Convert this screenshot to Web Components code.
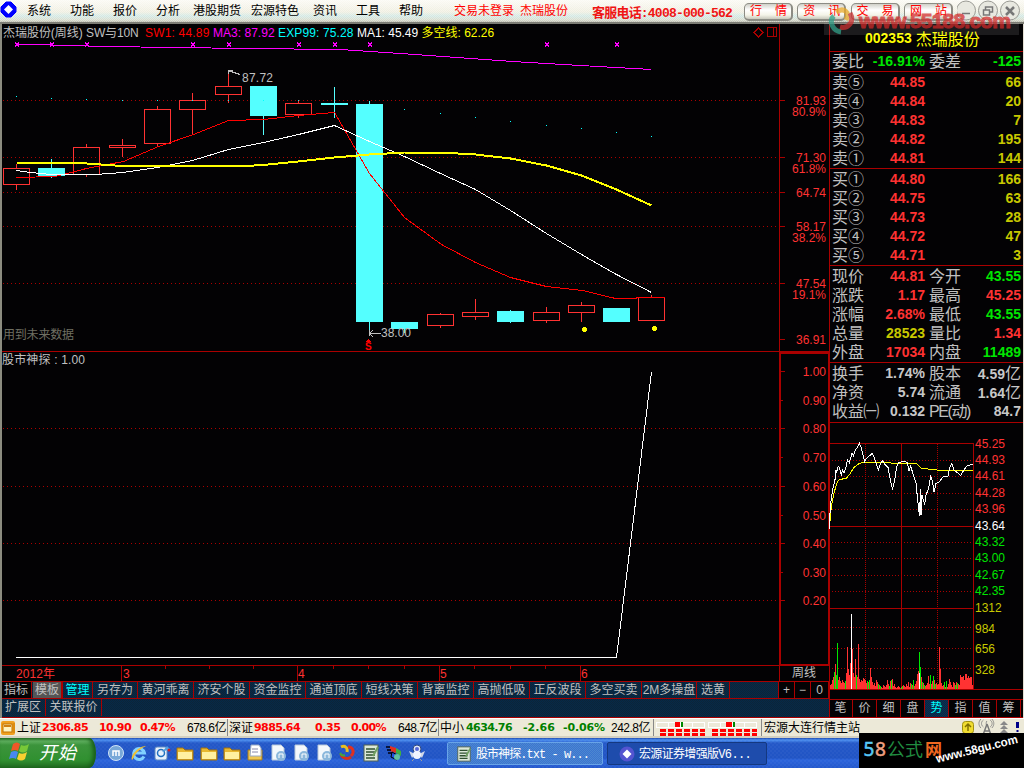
<!DOCTYPE html>
<html lang="zh-CN">
<head>
<meta charset="utf-8">
<title>杰瑞股份</title>
<style>
  html, body { margin: 0; padding: 0; }
  body {
    width: 1024px;
    height: 768px;
    overflow: hidden;
    background: #030204;
    font: 12px/16px "Liberation Sans", "Noto Sans CJK SC", sans-serif;
    color: #c0c0c0;
  }
</style>
</head>
<body>
<stock-terminal></stock-terminal>

<script>
// Text with a fixed width: the letter spacing is adjusted so that it fits
class FitText extends HTMLElement {
  constructor() {
    super();
    this.attachShadow({ mode: 'open' });
    this.shadowRoot.innerHTML = `
      <style>
        :host { display: inline-block; white-space: nowrap; flex: none; }
        span { display: inline-block; white-space: pre; }
      </style>
      <span><slot></slot></span>
    `;
  }

  connectedCallback() {
    const width = Number(this.getAttribute('w'));
    const span = this.shadowRoot.querySelector('span');
    const count = this.textContent.length;
    const natural = span.getBoundingClientRect().width;
    if (!width || !natural) return;
    span.style.letterSpacing = (width - natural) / count + 'px';
    this.style.width = width + 'px';
  }
}
customElements.define('fit-text', FitText);

class MenuBar extends HTMLElement {
  constructor() {
    super();
    this.attachShadow({ mode: 'open' });
    const items = [['系统', 43], ['功能', 43], ['报价', 43], ['分析', 37], ['港股期货', 58], ['宏源特色', 62], ['资讯', 43], ['工具', 43], ['帮助', 55]];
    this.shadowRoot.innerHTML = `
      <style>
        :host {
          display: flex;
          align-items: center;
          height: 22px;
          color: #000;
          border-bottom: 2px solid #7c7c74;
          background:
            repeating-conic-gradient(#fff5 0 25%, transparent 0 50%) 0 0 / 2px 2px,
            linear-gradient(#fbfaf4, #efeee0 12px, #d2e8e4 16px, #d8dccc 20px, #b8b8ac);
        }
        .logo { width: 17px; height: 17px; margin: -3px 10px 0 0; flex: none; }
        .item, .login, .name { flex: none; }
        .login { color: #f00; width: 66px; }
        .name { color: #f00; width: 72px; }
        .phone { font: bold 13px "Liberation Mono", "Noto Sans CJK SC", monospace; color: #f01414; width: 152px; flex: none; }
        .btn {
          box-sizing: border-box;
          width: 49px;
          height: 18px;
          margin: 1px 4.3px 0 0;
          padding: 0 4px 0 5px;
          display: flex;
          justify-content: space-between;
          align-items: center;
          border: 1px solid #8c8c84;
          border-right-width: 2px;
          border-bottom-width: 2px;
          border-radius: 5px;
          background: linear-gradient(#d0d0c8, #fff 6px, #f4f4e8 11px, #c8c8bc);
          color: #f00;
          flex: none;
        }
        .btn i { font-style: normal; }
        .win { width: 66px; height: 22px; flex: none; }
      </style>
      <svg class="logo" viewBox="0 0 17 17">
        <path d="M6 1h5l5 5v5l-5 5H6l-5-5V6z" fill="#00f" stroke="#00f" stroke-linejoin="round"/>
        <path d="M8.500 4 13 8.500 8.500 13 4 8.500z" fill="#fff"/>
      </svg>
      ${items.map(([t, w]) => `<span class="item" style="width:${w}px">${t}</span>`).join('')}
      <span class="login">交易未登录</span>
      <span class="name">杰瑞股份</span>
      <span class="phone"><fit-text w="140">客服电话:4008-000-562</fit-text></span>
      ${['行情', '资讯', '交易', '网站'].map(t => `<span class="btn"><i>${t[0]}</i><i>${t[1]}</i></span>`).join('')}
      <svg class="win" viewBox="0 0 66 22" fill="#e8e8e0" stroke="#9a9a94">
        <circle cx="9" cy="10.500" r="9.500"/><circle cx="31" cy="10.500" r="9.500"/><circle cx="53" cy="10.500" r="9.500"/>
        <path d="M5 13.500h8M28.500 10V7h7v5h-3M26.500 10h6v5h-6z" stroke="#777" fill="none" stroke-width="1.500"/>
        <path d="M49 7l8 8M57 7l-8 8" stroke="#777" stroke-width="2.500"/>
      </svg>
    `;
  }
}
customElements.define('menu-bar', MenuBar);

// Weekly candles with the averages on top of them
class KlineChart extends HTMLElement {
  constructor() {
    super();
    this.attachShadow({ mode: 'open' });
    // x centre, box top, box bottom, wick top, wick bottom, rising
    const candles = [
      [16, 168, 184, 164, 190, 1], [51, 168, 176, 159, 178, 0], [86, 147, 174, 144, 177, 1],
      [122, 145, 147, 139, 157, 1], [157, 109, 143, 106, 147, 1], [192, 100, 109, 93, 134, 1],
      [228, 86, 94, 73, 103, 1], [263, 86, 116, 86, 135, 0], [298, 103, 114, 101, 118, 1],
      [334, 103, 105, 87, 118, 0], [369, 104, 322, 101, 333, 0], [404, 322, 329, 322, 333, 0],
      [440, 314, 325, 313, 328, 1], [475, 312, 316, 299, 320, 1], [510, 311, 322, 310, 323, 0],
      [546, 312, 320, 307, 323, 1], [581, 305, 312, 302, 322, 1], [616, 308, 322, 308, 322, 0],
      [651, 297, 320, 295, 320, 1]
    ];
    const body = candles.map(([x, t, b, h, l, up]) => up
      ? `<path d="M${x + .5} ${h}V${t}M${x + .5} ${b}V${l}M${x - 12.5} ${t + .5}h26V${b + .5}h-26z" fill="none" stroke="#ff3232"/>`
      : `<path d="M${x - 13} ${t}h27V${b}h-27zM${x} ${h}h1V${l}h-1z" fill="#54ffff"/>`).join('');
    const grid = [100, 157, 192, 226, 283].map(y => `<path d="M3 ${y + .5}H779" stroke-dasharray="1 3"/>`).join('');
    const ticks = [100, 157, 192, 226, 283, 339].map(y => `<path d="M779 ${y + .5}h6"/>`).join('');
    const labels = [[105, '81.93'], [116, '80.9%'], [162, '71.30'], [173, '61.8%'], [197, '64.74'], [231, '58.17'], [242, '38.2%'], [288, '47.54'], [299, '19.1%'], [344, '36.91']]
      .map(([y, t]) => `<text x="826" y="${y}" text-anchor="end" textLength="${t.includes('%') ? 34 : 30}">${t}</text>`).join('');
    const dots = [[16, 96], [51, 98], [86, 99], [122, 100], [157, 100], [192, 100], [228, 100], [263, 100], [298, 100], [404, 109], [440, 113], [475, 117], [510, 121], [546, 125], [581, 128], [616, 132], [651, 136]]
      .map(([x, y]) => `<rect x="${x}" y="${y}" width="1" height="1"/>`).join('');
    const marks = [17, 52, 87, 193, 229, 299, 335, 370, 547, 617]
      .map(x => `<path d="M${x - 2} 42l4 4M${x + 2} 42l-4 4"/>`).join('');

    this.shadowRoot.innerHTML = `
      <style>
        :host { display: grid; height: 328px; background: #030204; }
        .head, svg { grid-area: 1 / 1; }
        svg { display: block; shape-rendering: crispEdges; }
        text { font-size: 12px; fill: #ff3232; }
        .head { display: flex; height: 17px; padding-left: 3px; align-items: center; z-index: 1; }
      </style>
      <div class="head">
        <fit-text w="83">杰瑞股份(周线) </fit-text>
        <fit-text w="59">SW与10N  </fit-text>
        <fit-text w="68" style="color:#f00">SW1: 44.89 </fit-text>
        <fit-text w="65" style="color:#f0f">MA3: 87.92 </fit-text>
        <fit-text w="79" style="color:#0ff">EXP99: 75.28 </fit-text>
        <fit-text w="64.500" style="color:#fff">MA1: 45.49 </fit-text>
        <fit-text w="76" style="color:#ff0">多空线: 62.26 </fit-text>
      </div>
      <svg width="829" height="328" viewBox="0 24 829 328">
        <g stroke="#aa0000" fill="none">
          ${grid}${ticks}
          <path d="M779.5 24V352M0 351.5H829"/>
          <path d="M767.5 27.500h9v9h-9zM773.5 27V37M758.5 28l4.500 4.500-4.500 4.500-4.500-4.500z"/>
        </g>
        ${body}
        <g fill="none" transform="translate(.5 .5)">
          <polyline points="16,44 34,44 104,46 175,47 246,48 340,49 400,53 512,61 580,65 651,69" stroke="#f0f"/>
          <polyline points="16,177 55,176 86,168 123,161 158,146 193,134 228,120 263,119 298,115 334,112 369,173 404,217 441,244 475,262 510,277 546,286 582,290 615,298 634,298 638,297 664,297" stroke="#f00"/>
          <polyline points="16,170 30,172 51,174 95,174 122,172 157,167 192,160 228,149 263,142 298,134 334,125 369,141 404,156 440,173 475,189 510,210 546,233 581,254 616,274 651,292" stroke="#fff"/>
          <polyline points="16,162 51,162 86,163 122,165.500 245,165.500 263,164.500 298,161 334,157 369,154 404,152 440,152 475,154 510,158 546,165 581,175 616,189 651,205" stroke="#ff0" stroke-width="2"/>
        </g>
        <g fill="#0ff">${dots}</g>
        <g stroke="#f0f" transform="translate(0 .5)">${marks}</g>
        <circle cx="584.5" cy="329.5" r="2.5" fill="#ff0"/>
        <circle cx="654.5" cy="328.5" r="2.5" fill="#ff0"/>
        <path d="M228.500 74v-4h4M228 70.500l12 4M369.500 336v-6M370 333.500h11M370 333l3-3M370 334l3 3" stroke="#c0c0c0" fill="none"/>
        <text x="242" y="82" style="fill:#c0c0c0" textLength="31">87.72</text>
        <text x="381" y="337" style="fill:#c0c0c0" textLength="30">38.00</text>
        <text x="365" y="350" style="fill:#f00;font-weight:bold;font-size:10px">S</text>
        <path d="M366 341.500l2.500-2.500 2.500 2.500z" fill="#f00"/>
        <text x="3" y="338.5" style="fill:#6f6f62" textLength="71">用到未来数据</text>
        ${labels}
      </svg>
    `;
  }
}
customElements.define('kline-chart', KlineChart);

class IndicatorChart extends HTMLElement {
  constructor() {
    super();
    this.attachShadow({ mode: 'open' });
    const levels = [371, 400, 428, 457, 486, 515, 543, 572, 600];
    const scale = levels.map((y, i) => `
      <path d="M779 ${y + .5}h${i % 2 ? 4 : 6}"/>
      ${i && i % 2 === 0 ? `<path d="M3 ${y + .5}H779" stroke-dasharray="1 3"/>` : ''}`).join('');
    const labels = levels.map((y, i) => `<text x="826" y="${y + 5}" text-anchor="end">${(1 - i / 10).toFixed(2)}</text>`).join('');
    const minor = [165, 209, 253, 333, 368, 404, 474, 510, 545].map(x => `<path d="M${x + .5} 666v3"/>`).join('');
    const major = [121, 297, 439, 580].map(x => `<path d="M${x + .5} 665v17"/>`).join('');
    this.shadowRoot.innerHTML = `
      <style>
        :host { display: block; height: 330px; }
        svg { display: block; shape-rendering: crispEdges; }
        text { font-size: 12px; fill: #ff3232; }
      </style>
      <svg width="829" height="330" viewBox="0 352 829 330">
        <g stroke="#aa0000" fill="none">
          ${scale}${minor}${major}
          <path d="M0 665.5H829M0 681.5H829M779.500 665v17"/>
          <path d="M780 352V665M829 352V665M779 353H829M779 664.500H829" stroke-width="2"/>
        </g>
        <polyline points="16,657.5 616.5,657.5 651.5,372" fill="none" stroke="#fff"/>
        <text x="2" y="364" style="fill:#c0c0c0" textLength="83">股市神探 : 1.00</text>
        ${labels}
        <text x="16" y="678" textLength="39">2012年</text>
        <text x="123" y="678">3</text><text x="298" y="678">4</text><text x="440" y="678">5</text><text x="581" y="678">6</text>
        <text x="792" y="677" style="fill:#c0c0c0">周线</text>
      </svg>
    `;
  }
}
customElements.define('indicator-chart', IndicatorChart);

class TemplateTabs extends HTMLElement {
  constructor() {
    super();
    this.attachShadow({ mode: 'open' });
    const tabs = [['另存为', 45], ['黄河乖离', 56], ['济安个股', 56], ['资金监控', 56], ['通道顶底', 56], ['短线决策', 56], ['背离监控', 56], ['高抛低吸', 56], ['正反波段', 56], ['多空买卖', 56], ['2M多操盘', 55], ['选黄', 33]];
    this.shadowRoot.innerHTML = `
      <style>
        :host {
          display: block;
          height: 36px;
          box-sizing: border-box;
          background: repeating-conic-gradient(#062a48 0 25%, #0c2438 0 50%) 0 0 / 2px 2px;
          border-bottom: 1px solid #aa0000;
        }
        div { display: flex; height: 16px; line-height: 16px; border-bottom: 1px solid #aa0000; padding-left: 1px; }
        div + div { border: 0; height: 17px; }
        span { box-sizing: border-box; border-right: 1px solid #aa0000; text-align: center; flex: none; white-space: nowrap; }
        .black { background: #030204; }
        .gray { background: #555; margin-left: 1px; }
        .on { color: #0ff; border-left: 1px solid #aa0000; }
        .gap { flex: 1; }
      </style>
      <div>
        <span class="black" style="width:31px">指标</span>
        <span class="gray" style="width:29px">模板</span>
        <span class="on" style="width:31px">管理</span>
        ${tabs.map(([t, w]) => `<span style="width:${w}px">${t}</span>`).join('')}
        <span class="gap"></span>
        <span class="black" style="width:16px">+</span><span class="black" style="width:16px">−</span><span class="black" style="width:18px">0</span>
      </div>
      <div><span style="width:45px">扩展区</span><span style="width:56px">关联报价</span></div>
    `;
  }
}
customElements.define('template-tabs', TemplateTabs);

// One line of the quote panel: label, value and an optional second pair
class QuoteRow extends HTMLElement {
  constructor() {
    super();
    this.attachShadow({ mode: 'open' });
    this.shadowRoot.innerHTML = `
      <style>
        :host {
          display: grid;
          grid-template-columns: 48px 45px 50px 1fr;
          height: 19px;
          line-height: 19px;
          padding: 0 2px;
          font-size: 16px;
          white-space: nowrap;
        }
        b { font-size: 14px; display: flex; justify-content: flex-end; }
        .second { padding-left: 4px; }
      </style>
      <span><slot name="label"></slot></span>
      <b><slot name="value"></slot></b>
      <span class="second"><slot name="label2"></slot></span>
      <b><slot name="value2"></slot></b>
    `;
  }
}
customElements.define('quote-row', QuoteRow);

class DayChart extends HTMLElement {
  constructor() {
    super();
    this.attachShadow({ mode: 'open' });
    const red = '#ff3232', green = '#00e600', yellow = '#c8c800', white = '#ffffff';
    const labels = [[444, '45.25', red], [460, '44.93', red], [476, '44.61', red], [493, '44.28', red], [509, '43.96', red], [526, '43.64', white], [542, '43.32', green], [558, '43.00', green], [575, '42.67', green], [591, '42.35', green], [608, '1312', yellow], [629, '984', yellow], [649, '656', yellow], [670, '328', yellow]]
      .map(([y, t, c]) => `<text x="975" y="${y + 4}" fill="${c}">${t}</text>`).join('');
    const dotted = [460, 476, 493, 509, 542, 558, 575, 591, 627, 648, 668]
      .map(y => `<path d="M832 ${y + .5}H973" stroke-dasharray="1 2"/>`).join('');

    // small bars, then the peaks over them
    const low = [4, 5, 9, 12, 17, 12, 14, 11, 9, 12, 8, 6, 9, 7, 6, 8, 16, 12, 20, 14, 26, 14, 13, 16, 12, 24, 14, 12, 16, 10, 7, 9, 8, 11, 10, 9, 6, 8, 7, 9, 20, 12, 7, 4, 6, 3, 9, 7, 5, 4, 3, 2, 1, 4, 3, 2, 4, 9, 5, 3, 8, 9, 10, 3, 5, 2, 1, 2, 3, 2, 1, 2, 3, 4, 3, 2, 5, 3, 7, 2, 6, 5, 4, 9, 3, 5, 8, 15, 18, 18, 12, 12, 7, 6, 4, 3, 4, 6, 13, 5, 3, 5, 8, 13, 9, 5, 6, 4, 5, 16, 19, 6, 3, 4, 7, 2, 8, 2, 5, 10, 7, 4, 2, 7, 6, 4, 7, 6, 5, 4, 14, 12, 12, 13, 9, 14, 14, 11, 13, 11, 12, 12, 4];
    const cols = [red, red, red, red, green, green, red, white, red, green, green];
    const bars = low.map((h, i) => `<rect x="${830 + i}" y="${689 - h}" width="1" height="${h}" fill="${i > 129 && i < 142 ? red : cols[(i * i + i) % 11]}"/>`).join('');
    const peaks = [[835, 25, red], [837, 46, green], [847, 42, red], [851, 75, white], [852, 40, red], [855, 30, red], [858, 45, red], [870, 21, red], [919, 37, green], [920, 22, green], [919, 16, white], [939, 42, red], [940, 20, red], [930, 14, green], [965, 15, red], [966, 15, red]]
      .map(([x, h, c]) => `<rect x="${x}" y="${689 - h}" width="1" height="${h}" fill="${c}"/>`).join('');

    this.shadowRoot.innerHTML = `
      <style>
        :host { display: block; height: 276px; }
        svg { display: block; shape-rendering: crispEdges; }
        text { font-size: 12px; }
        polyline { fill: none; vector-effect: non-scaling-stroke; }
      </style>
      <svg width="194" height="276" viewBox="829 423 194 276">
        <g stroke="#aa0000" fill="none">
          ${dotted}
          <path d="M865.5 444V689M937.500 444V689" stroke-dasharray="1 1"/>
          <path d="M829 443.500H974M829 526.500H974M829 608.500H974M829 689.500H1023M901.500 443V689M973.500 443V689"/>
        </g>
        ${bars}${peaks}
        <g transform="translate(824 420) scale(.33333)">
          <polyline stroke="#ff0" points="17,316 22,260 30,220 38,190 46,178 66,176 78,162 90,142 106,130 120,127 200,129 232,131 278,131 292,145 330,149 350,151 448,151"/>
          <polyline stroke="#fff" points="17,328 18,280 22,232 27,205 35,170 36,150 38,158 42,140 46,142 52,165 56,150 60,158 66,140 70,120 76,128 84,100 88,108 94,90 100,82 106,70 112,84 117,105 122,125 126,116 136,108 144,100 150,112 158,135 163,150 170,130 176,122 184,135 192,142 198,175 202,195 206,206 212,180 218,140 224,128 240,124 250,128 255,152 260,138 268,165 276,190 280,230 284,270 287,287 289,208 291,285 294,224 298,240 302,254 306,225 314,205 320,170 325,182 330,216 336,190 346,185 358,170 372,168 378,140 384,131 390,150 400,158 410,166 420,150 428,138 446,133"/>
        </g>
        ${labels}
      </svg>
    `;
  }
}
customElements.define('day-chart', DayChart);

class QuotePanel extends HTMLElement {
  constructor() {
    super();
    this.attachShadow({ mode: 'open' });
    const row = (l, v, c, l2, v2, c2) => `
      <quote-row>
        <fit-text slot="label" w="${l.length > 2 ? 47 : 32}">${l}</fit-text><span slot="value" class="${c}">${v}</span>
        ${l2 ? `<fit-text slot="label2" w="${l2.length > 2 ? 41 : 32}">${l2}</fit-text>` : ''}<span slot="value2" class="${c2}">${v2}</span>
      </quote-row>`;
    const level = (l, v, n) => row(l, v, 'r', '', n, 'y');
    this.shadowRoot.innerHTML = `
      <style>
        :host {
          display: block;
          border-left: 1px solid #aa0000;
          border-right: 1px solid #e4e0d4;
          background: #030204;
        }
        h1 {
          margin: 0;
          height: 27px;
          display: flex;
          align-items: center;
          padding-left: 35px;
          gap: 4px;
          color: #ff0;
          font: 16px "Liberation Sans", "Noto Sans CJK SC", sans-serif;
        }
        h1 b { font-size: 14px; }
        section { border-top: 1px solid #aa0000; padding-top: 1px; }
        .r { color: #ff3232; }
        .g { color: #00e600; }
        .y { color: #c8c800; }
        .w { color: #c8c8c8; }
        u { text-decoration: none; font-weight: normal; font-size: 16px; }
        day-chart { border-top: 1px solid #aa0000; margin-left: -1px; }
        nav { display: flex; height: 17px; border: solid #aa0000; border-width: 1px 0; margin-left: -1px; line-height: 17px; }
        nav span { width: 24px; box-sizing: border-box; border-right: 1px solid #aa0000; text-align: center; }
        nav .on { color: #0ff; background: repeating-conic-gradient(#083058 0 25%, #0c2840 0 50%) 0 0 / 2px 2px; }
      </style>
      <h1><b>002353</b><span>杰瑞股份</span></h1>
      <section style="padding:0">${row('委比', '-16.91%', 'g', '委差', '-125', 'g')}</section>
      <section>
        ${level('卖⑤', '44.85', 66)}${level('卖④', '44.84', 20)}${level('卖③', '44.83', 7)}${level('卖②', '44.82', 195)}${level('卖①', '44.81', 144)}
      </section>
      <section>
        ${level('买①', '44.80', 166)}${level('买②', '44.75', 63)}${level('买③', '44.73', 28)}${level('买④', '44.72', 47)}${level('买⑤', '44.71', 3)}
      </section>
      <section>
        ${row('现价', '44.81', 'r', '今开', '43.55', 'g')}
        ${row('涨跌', '1.17', 'r', '最高', '45.25', 'r')}
        ${row('涨幅', '2.68%', 'r', '最低', '43.55', 'g')}
        ${row('总量', '28523', 'y', '量比', '1.34', 'r')}
        ${row('外盘', '17034', 'r', '内盘', '11489', 'g')}
      </section>
      <section style="padding-bottom:1px">
        ${row('换手', '1.74%', 'w', '股本', '4.59<u>亿</u>', 'w')}
        ${row('净资', '5.74', 'w', '流通', '1.64<u>亿</u>', 'w')}
        ${row('收益㈠', '0.132', 'w', 'PE(动)', '84.7', 'w')}
      </section>
      <day-chart></day-chart>
      <nav>${['笔', '价', '细', '盘', '势', '指', '值', '筹'].map(t => `<span class="${t === '势' ? 'on' : ''}">${t}</span>`).join('')}</nav>
    `;
  }
}
customElements.define('quote-panel', QuotePanel);

class IndexBar extends HTMLElement {
  constructor() {
    super();
    this.attachShadow({ mode: 'open' });
    const index = (name, cls, a, b, c, sum, cols) => `
      <div class="idx" style="grid-template-columns:${cols}">
        <span>${name}</span>
        <fit-text class="${cls}" w="46">${a}</fit-text>
        <fit-text class="${cls}" w="${b.length * 6.4}">${b}</fit-text>
        <fit-text class="${cls}" w="${c.length * 7}">${c}</fit-text>
        <fit-text w="39">${sum}</fit-text>
      </div>`;
    const meter = x => `
      <g transform="translate(${x} 0)">
        <path d="M0 3.500h49M0 8.500h49M.5 3v6M12.500 3v6M24.500 3v6M36.500 3v6M48.500 3v6" stroke="#fff"/>
        <path d="M4 11.500h45M4 15.500h45" stroke="#f00" stroke-width="3" stroke-dasharray="6 2"/>
      </g>`;
    this.shadowRoot.innerHTML = `
      <style>
        :host {
          display: flex;
          align-items: center;
          height: 20px;
          box-sizing: border-box;
          background: #ece9d8;
          border-top: 1px solid #fff;
          border-bottom: 2px solid #d4d0c0;
          color: #000;
        }
        .idx { display: grid; align-items: center; border-right: 1px solid #888; height: 17px; flex: none; padding-left: 1px; }
        .up, .down { font: bold 11px/16px "DejaVu Sans", sans-serif; color: #f00; }
        .down { color: #008000; }
        .icon { width: 16px; height: 16px; flex: none; }
        .meter { width: 107px; height: 17px; border-right: 1px solid #888; flex: none; shape-rendering: crispEdges; }
        .host { margin-left: 2px; width: 195px; flex: none; }
        .tray { width: 64px; height: 17px; flex: none; }
      </style>
      <svg class="icon" viewBox="0 0 16 16">
        <rect x="1" y="1" width="14" height="14" rx="2" fill="#f0a020"/>
        <rect x="3" y="4" width="9" height="8" fill="#fff4c0" stroke="#c07000"/>
        <path d="M4 5h7v2H4z" fill="#d08010"/><path d="M14 3v10" stroke="#c87800"/>
      </svg>
      ${index('上证', 'up', '2306.85', '10.90', '0.47%', '678.6亿', '25px 57px 41px 47px 40px')}
      ${index('深证', 'up', '9885.64', '0.35', '0.00%', '648.7亿', '25px 61px 36px 47px 40px')}
      ${index('中小', 'down', '4634.76', '-2.66', '-0.06%', '242.8亿', '26px 57px 40px 48px 42px')}
      <svg class="meter" viewBox="0 0 107 17" fill="none">
        ${meter(2)}${meter(54)}
        <path d="M21 3h5v5h-5zM72 3h6v5h-6z" fill="#f00"/><path d="M27 3h2v5h-2zM79 3h2v5h-2z" fill="#080"/>
      </svg>
      <span class="host">宏源大连行情主站</span>
      <svg class="tray" viewBox="0 0 64 17" fill="none">
        <rect x="3.500" y="2.500" width="11" height="12" rx="3" fill="#f0dc30" stroke="#a09010"/>
        <path d="M9 12V6M6 8l3-3 3 3" stroke="#807000" stroke-width="1.500"/>
        <path d="M24 1c-3 2-3 5 0 7M28 2c-1 2-1 3 0 5M32 1c3 2 3 5 0 7M21 0c-3 3-3 6 0 9M34 0c3 3 3 6 0 9" transform="translate(4 0) scale(.85 1)" stroke="#888"/>
        <path d="M28 5l-4 11M28 5l4 11M26 12h5" stroke="#777" stroke-width="1.500"/>
        <path d="M45 2l4 4h-8zM45 6l4 4h-8zM45 10l4 4h-8zM44 13h2v3h-2z" fill="#888"/>
        <path d="M57 3h3v6h-3zM57.500 11h2v2h-2z" fill="#008"/>
      </svg>
    `;
  }
}
customElements.define('index-bar', IndexBar);

class TaskBar extends HTMLElement {
  constructor() {
    super();
    this.attachShadow({ mode: 'open' });
    const folder = '<path d="M1 4h6l2 2h8v10H1z" fill="#e8b830" stroke="#a07010"/><path d="M2 8h14v7H2z" fill="#fff0a0"/>';
    const page = '<path d="M3 1h9l3 3v12H3z" fill="#f4f8fc" stroke="#b8c8d8"/><circle cx="12" cy="12" r="5" fill="#8cb8dc"/><path d="M10 14v-4h4v4" stroke="#fff" fill="none"/>';
    const note = '<rect x="2" y="1" width="14" height="16" fill="#dce8d8" stroke="#506050"/><path d="M4 5h9M4 8h9M4 11h9M4 14h9" stroke="#305030" stroke-width="1.500"/><path d="M16 3l-5 9" stroke="#70a060" stroke-width="2"/>';
    const duck = '<circle cx="9" cy="5" r="4" fill="#e0e8f8" stroke="#304880"/><circle cx="9" cy="5" r="2" fill="#5868d8"/><path d="M1 7l6 3-3 4zM17 7l-6 3 3 4z" fill="#d0d8e8"/><circle cx="9" cy="11" r="4" fill="#f0f4ff"/><path d="M6 15l-2 2M12 15l2 2" stroke="#a0a0a0"/>';
    const icons = [
      '<circle cx="9" cy="9" r="7.500" fill="#78a8d8" stroke="#d0e4f8"/><path d="M6 12V7h6v5M9 7v5" stroke="#fff" stroke-width="1.500" fill="none"/>',
      '<path d="M14 12.500A5.500 5.500 0 1 1 14.500 9H5" stroke="#80d0ff" stroke-width="3" fill="none"/><path d="M2 16C0 11 9 2 16 2 11 4 5 9 3 15z" fill="#f0c030"/>',
      '<rect x="2" y="3" width="12" height="13" rx="2" fill="#e8f0fc" stroke="#608cc0"/><circle cx="8" cy="9" r="3.500" stroke="#2070c0" fill="none" stroke-width="1.500"/><path d="M9 8l5-6 3 3z" fill="#50a0e0"/><circle cx="16" cy="6" r="1.500" fill="#d02020"/>',
      folder, folder, folder,
      '<path d="M2 6h14v10H2z" fill="#f0c850" stroke="#a07820"/><path d="M5 1h8l2 3v8H4z" fill="#fff" stroke="#98a8c0"/><path d="M6 5h6M6 8h6" stroke="#88a"/>',
      page, page, page,
      '<g fill="none" stroke-width="3"><path d="M3 3c4-2 7 1 6 5" stroke="#e8c020"/><path d="M10 3c5 0 7 5 3 9" stroke="#e03020"/><path d="M13 13c-4 3-9 1-10-3" stroke="#d83018"/><path d="M2 9c1 2 3 3 5 2" stroke="#40a840" stroke-width="2"/></g>',
      note,
      '<path d="M5 2l6 2v5l-6-2z" fill="#e03020"/><path d="M11 4l5 3v5l-5-3z" fill="#40b040"/><path d="M7 8l5 3v5l-6-3z" fill="#2050e0" stroke="#000"/><path d="M1 3h4M2 6h4M3 9h4" stroke="#001" stroke-width="1.500"/><circle cx="12" cy="13" r="3" fill="#60c0a0"/>',
      duck
    ];
    this.shadowRoot.innerHTML = `
      <style>
        :host {
          display: flex;
          align-items: center;
          height: 30px;
          background:
            repeating-conic-gradient(#ffffff08 0 25%, transparent 0 50%) 0 0 / 4px 4px,
            linear-gradient(#1c48b0, #4c90f0 2px, #2458c8 5px, #2054c4 20px, #2c64dc 22px, #2458cc);
          color: #fff;
        }
        .start {
          width: 96px;
          height: 30px;
          display: flex;
          align-items: center;
          box-sizing: border-box;
          padding: 0 0 4px 9px;
          gap: 8px;
          border-radius: 0 7px 7px 0 / 0 15px 15px 0;
          background: linear-gradient(#2c7c2c, #60b060 3px, #3c943c 7px, #309030 22px, #206c20);
          box-shadow: inset -3px 0 4px #185c18;
          font: italic 18px "Liberation Sans", "Noto Sans CJK SC", sans-serif;
        }
        .flag { width: 22px; height: 20px; }
        .quick { display: flex; gap: 5.15px; margin-left: 11px; width: 340px; }
        .quick svg { width: 18px; height: 18px; flex: none; }
        .task {
          box-sizing: border-box;
          height: 23px;
          margin: 1px 4px 0 0;
          display: flex;
          align-items: center;
          padding-left: 8px;
          gap: 4px;
          background: repeating-conic-gradient(#4c88d0 0 25%, #3c74d0 0 50%) 0 0 / 2px 2px;
          border: 1px solid #68a4e8;
          border-radius: 2px;
          font: 12px/16px "Liberation Mono", "Noto Sans CJK SC", monospace;
        }
        .task svg { width: 16px; height: 18px; flex: none; }
        .task fit-text { padding-top: 2px; }
        .cur { background: #1e4cac; border-color: #143880; padding-left: 11px; }
      </style>
      <div class="start">
        <svg class="flag" viewBox="0 0 22 20">
          <path d="M4 3q4-3 7 0l-2 7q-3-2-7 0z" fill="#f05828"/><path d="M12 4q4 2 8-1l-2 7q-4 3-8 0z" fill="#78c838"/>
          <path d="M2 11q4-2 7 0l-2 7q-3-2-7 0z" fill="#4888f0"/><path d="M10 12q4 2 8-1l-2 7q-4 3-8 0z" fill="#f8d030"/>
        </svg>
        <fit-text w="38">开始</fit-text>
      </div>
      <div class="quick">${icons.map(i => `<svg viewBox="0 0 18 18">${i}</svg>`).join('')}</div>
      <div class="task" style="width:156px"><svg viewBox="0 0 18 18">${note}</svg><fit-text w="113">股市神探.txt - w...</fit-text></div>
      <div class="task cur" style="width:160px">
        <svg viewBox="0 0 16 16"><circle cx="8" cy="8" r="7.500" fill="#5454d0"/><path d="M8 3.500 12.500 8 8 12.500 3.500 8z" fill="#fff"/></svg>
        <fit-text w="112">宏源证券增强版V6...</fit-text>
      </div>
    `;
  }
}
customElements.define('task-bar', TaskBar);

// Site marks laid over the top and the bottom right corner
class SiteMarks extends HTMLElement {
  constructor() {
    super();
    this.attachShadow({ mode: 'open' });
    this.shadowRoot.innerHTML = `
      <style>
        :host { display: block; }
        svg { position: absolute; display: block; }
        .top { left: 824px; top: 0; }
        .bottom { left: 859px; top: 733px; }
      </style>
      <svg class="top" width="200" height="36">
        <rect y="23" width="195" height="12" fill="#fff" opacity=".1"/>
        <g fill="none" stroke-width="5" opacity=".75">
          <path d="M12 12c8-5 14 0 10 8" stroke="#e8a828"/>
          <path d="M26 13c5 9-2 16-10 14" stroke="#c83030"/>
          <path d="M10 16c-6 5-1 15 7 16" stroke="#30a088"/>
        </g>
        <text x="35" y="28" textLength="152" fill="#d42828" opacity=".72" stroke="#d42828" style="font:bold 21px 'Liberation Sans',sans-serif">www.55188.com</text>
      </svg>
      <svg class="bottom" width="165" height="35">
        <rect width="165" height="35" fill="#000"/>
        <g style="font:19px 'Noto Sans','Noto Sans CJK SC',sans-serif">
          <text x="4.500" y="23" fill="#58c8f8" stroke="#58c8f8" stroke-width=".5">5</text><text x="16" y="23" fill="#f0a080" stroke="#f0a080" stroke-width=".5">8</text>
          <text x="28" y="23" fill="#208c40" style="font-size:18px" textLength="36">公式</text>
          <text x="66" y="23" fill="#f06820" style="font-size:17px" font-weight="bold">网</text>
        </g>
        <text transform="translate(78 30) rotate(-14)" textLength="84" lengthAdjust="spacingAndGlyphs" fill="#fff" style="font:bold 12px 'Liberation Sans',sans-serif">www.58gu.com</text>
      </svg>
    `;
  }
}
customElements.define('site-marks', SiteMarks);

class StockTerminal extends HTMLElement {
  constructor() {
    super();
    this.attachShadow({ mode: 'open' });
    this.shadowRoot.innerHTML = `
      <style>
        :host { display: block; position: relative; width: 1024px; height: 768px; overflow: hidden; }
        main { display: grid; grid-template-columns: 829px 195px; height: 694px; }
        .left { position: relative; }
        .left::before { content: ""; position: absolute; z-index: 2; left: 0; top: 0; width: 2px; height: 694px; background: #8c8c80; }
      </style>
      <menu-bar></menu-bar>
      <main>
        <div class="left">
          <kline-chart></kline-chart>
          <indicator-chart></indicator-chart>
          <template-tabs></template-tabs>
        </div>
        <quote-panel></quote-panel>
      </main>
      <index-bar></index-bar>
      <task-bar></task-bar>
      <site-marks></site-marks>
    `;
  }
}
customElements.define('stock-terminal', StockTerminal);
</script>
</body>
</html>
